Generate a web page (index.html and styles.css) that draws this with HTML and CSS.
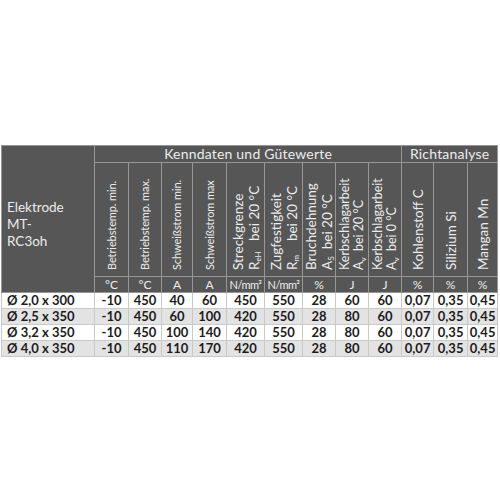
FILE: index.html
```html
<!DOCTYPE html>
<html>
<head>
<meta charset="utf-8">
<link rel="stylesheet" href="styles.css">
</head>
<body>
<table class="spec">
  <colgroup>
    <col class="c-name">
    <col class="c34"><col class="c33"><col class="c31"><col class="c34">
    <col class="c38"><col class="c38"><col class="c33"><col class="c33"><col class="c33">
    <col class="c32"><col class="c34"><col class="c30">
  </colgroup>
  <thead>
    <tr class="r-group">
      <th class="name" rowspan="3">Elektrode<br>MT-<br>RC3oh</th>
      <th class="group" colspan="9">Kenndaten und Gütewerte</th>
      <th class="group" colspan="3">Richtanalyse</th>
    </tr>
    <tr class="r-vert">
      <th class="vert"><div class="vt small">Betriebstemp. min.</div></th>
      <th class="vert"><div class="vt small">Betriebstemp. max.</div></th>
      <th class="vert"><div class="vt small">Schweißstrom min.</div></th>
      <th class="vert"><div class="vt small">Schweißstrom max</div></th>
      <th class="vert"><div class="vt">Streckgrenze<br>R<sub>eH</sub>&nbsp;&nbsp; bei 20 °C</div></th>
      <th class="vert"><div class="vt">Zugfestigkeit<br>R<sub>m</sub>&nbsp;&nbsp;&nbsp; bei 20 °C</div></th>
      <th class="vert"><div class="vt">Bruchdehnung<br>A<sub>5</sub>&nbsp; bei 20 °C</div></th>
      <th class="vert"><div class="vt mid">Kerbschlagarbeit<br>A<sub>v</sub>&nbsp; bei 20 °C</div></th>
      <th class="vert"><div class="vt mid">Kerbschlagarbeit<br>A<sub>v</sub>&nbsp; bei 0 °C</div></th>
      <th class="vert"><div class="vt">Kohlenstoff C</div></th>
      <th class="vert"><div class="vt">Silizium Si</div></th>
      <th class="vert"><div class="vt">Mangan Mn</div></th>
    </tr>
    <tr class="r-unit">
      <th>°C</th><th>°C</th><th>A</th><th>A</th>
      <th class="nmm">N/mm²</th><th class="nmm">N/mm²</th>
      <th>%</th><th>J</th><th>J</th><th>%</th><th>%</th><th>%</th>
    </tr>
  </thead>
  <tbody>
    <tr>
      <td class="first">Ø 2,0 x 300</td><td>-10</td><td>450</td><td>40</td><td>60</td><td>450</td><td>550</td><td>28</td><td>60</td><td>60</td><td>0,07</td><td>0,35</td><td>0,45</td>
    </tr>
    <tr class="alt">
      <td class="first">Ø 2,5 x 350</td><td>-10</td><td>450</td><td>60</td><td>100</td><td>420</td><td>550</td><td>28</td><td>80</td><td>60</td><td>0,07</td><td>0,35</td><td>0,45</td>
    </tr>
    <tr>
      <td class="first">Ø 3,2 x 350</td><td>-10</td><td>450</td><td>100</td><td>140</td><td>420</td><td>550</td><td>28</td><td>80</td><td>60</td><td>0,07</td><td>0,35</td><td>0,45</td>
    </tr>
    <tr class="alt">
      <td class="first">Ø 4,0 x 350</td><td>-10</td><td>450</td><td>110</td><td>170</td><td>420</td><td>550</td><td>28</td><td>80</td><td>60</td><td>0,07</td><td>0,35</td><td>0,45</td>
    </tr>
  </tbody>
</table>
</body>
</html>
```
FILE: styles.css
```css
html, body {
  margin: 0;
  padding: 0;
  background: #ffffff;
}
body {
  font-family: Lato, "Open Sans", sans-serif;
}
.spec {
  margin: 145px 0 0 1px;
  border-collapse: collapse;
  table-layout: fixed;
  width: 497px;
}
.c-name { width: 93px; }
.c30 { width: 30px; }
.c31 { width: 31px; }
.c32 { width: 32px; }
.c33 { width: 33px; }
.c34 { width: 34px; }
.c38 { width: 38px; }

.spec th {
  background: #565656;
  color: #ececec;
  border: 1px solid #979797;
  font-weight: 400;
  padding: 0;
}
.r-group th.group {
  height: 16px;
  font-size: 14px;
  line-height: 16px;
  letter-spacing: 0.2px;
}
th.name {
  text-align: left;
  vertical-align: middle;
  font-size: 13.5px;
  line-height: 17px;
  padding: 10px 0 0 5px;
}
.r-vert th {
  height: 110px;
  vertical-align: bottom;
  text-align: center;
  padding: 0 0 3px 0;
}
.vt {
  display: inline-block;
  writing-mode: vertical-rl;
  transform: rotate(180deg);
  height: 104px;
  text-align: start;
  font-size: 13.5px;
  line-height: 16px;
  white-space: nowrap;
}
.vt.small {
  font-size: 11px;
  letter-spacing: -0.1px;
}
.vt.mid {
  font-size: 12.5px;
  line-height: 14px;
}
.vt sub {
  font-size: 8px;
  line-height: 0;
}
.r-unit th {
  height: 15px;
  font-size: 12px;
  line-height: 15px;
  text-align: center;
}
.r-unit th.nmm {
  font-size: 11px;
  letter-spacing: -0.6px;
}
.spec td {
  background: #ffffff;
  color: #1c1c1c;
  border: 1px solid #c9c9c9;
  height: 15px;
  padding: 0;
  font-size: 13px;
  font-weight: 700;
  line-height: 15px;
  text-align: center;
}
.spec tr.alt td {
  background: #e3e3e3;
}
.spec td.first {
  text-align: left;
  padding-left: 5px;
}
```
